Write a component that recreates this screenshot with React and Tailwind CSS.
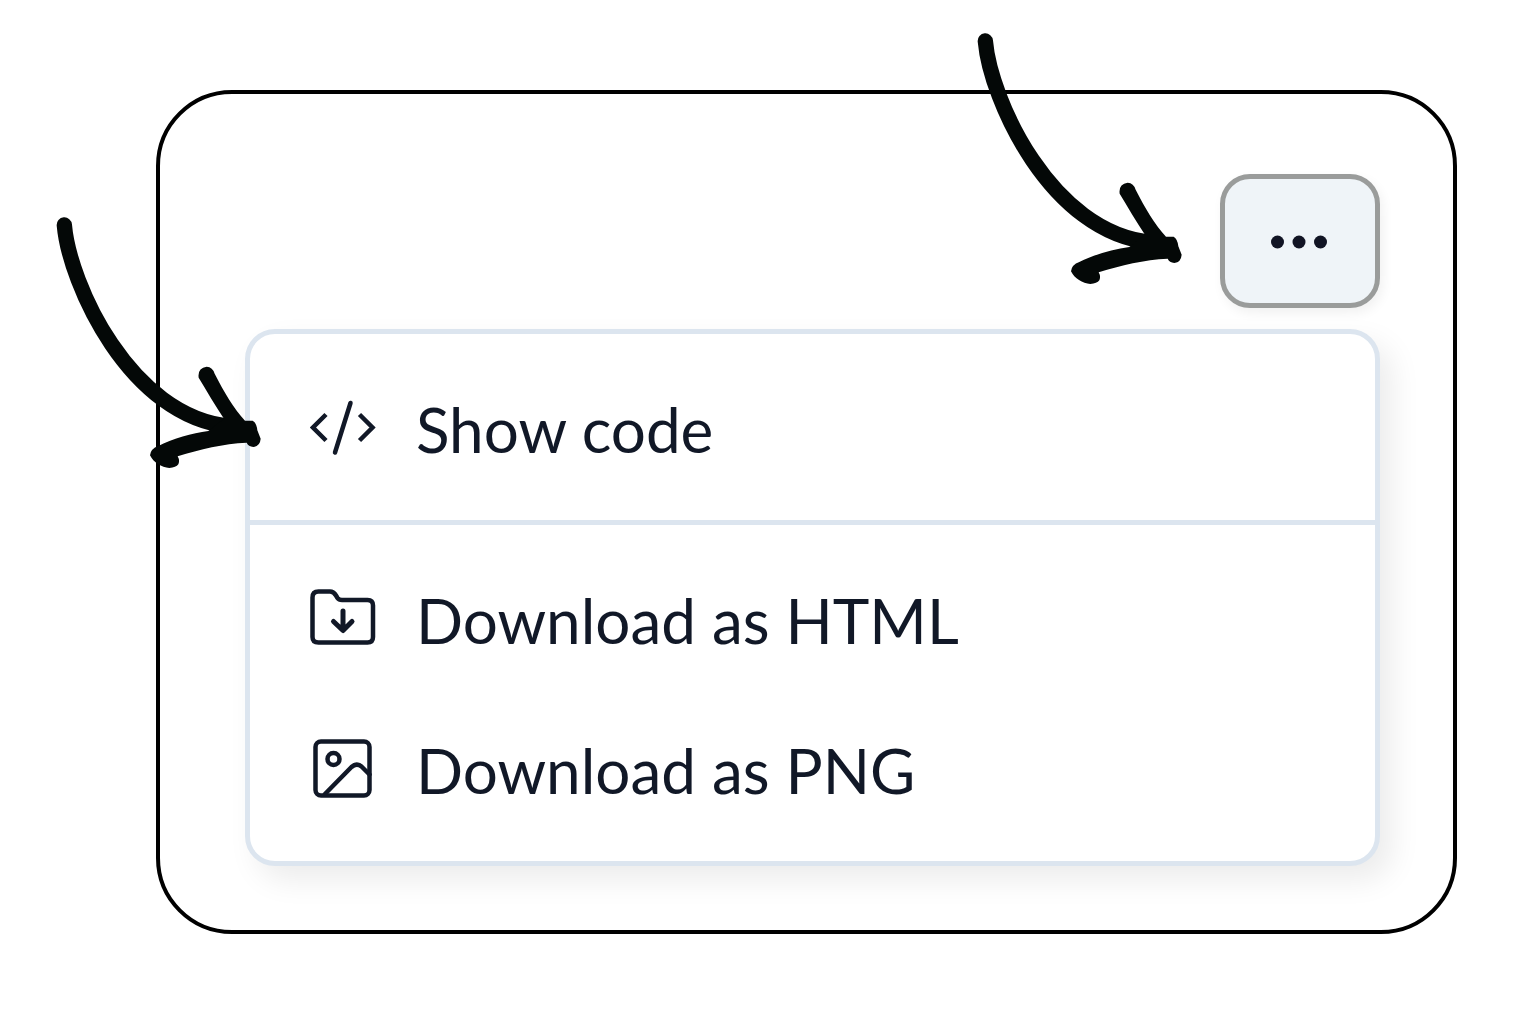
import React from "react";

function HandArrow({ className }) {
  return (
    <svg
      aria-hidden="true"
      viewBox="78 50 615 753"
      className={`pointer-events-none absolute h-[251px] w-[205px] ${className}`}
    >
      <path
        fill="none"
        stroke="#040807"
        strokeWidth="46"
        strokeLinecap="round"
        d="M103 74C118 250 300 650 600 678"
      />
      <path
        fill="#040807"
        d="M582 655C555 614 530 572 506 532Q502 503 530 499Q548 500 554 520C582 575 612 625 645 661L668 661Q680 668 682 690L692 715Q690 738 670 740Q655 738 650 727C580 730 510 747 443 768Q450 780 445 792Q438 802 418 803C395 801 370 787 360 765Q362 745 385 737C430 715 485 698 535 692Z"
      />
    </svg>
  );
}

function Icon({ children }) {
  return (
    <svg
      aria-hidden="true"
      viewBox="0 0 66 60"
      className="h-[60px] w-[66px] shrink-0"
      fill="none"
      stroke="currentColor"
      strokeWidth="4.5"
      strokeLinecap="round"
      strokeLinejoin="round"
    >
      {children}
    </svg>
  );
}

function CodeIcon() {
  return (
    <Icon>
      <g strokeLinecap="butt" strokeLinejoin="miter">
        <path d="M16 17.5L3 30.5L16 43.5" />
        <path d="M49.5 17.5L62.5 30.5L49.5 43.5" />
      </g>
      <path d="M40.5 6L25 55.5" />
    </Icon>
  );
}

function FolderIcon() {
  return (
    <Icon>
      <path d="M8.5 3.5H20C23 3.5 24.5 5 26 7.5L27.5 10C28.5 11.5 30 12 32 12H57.5Q63 12 63 17.5V49Q63 54.5 57.5 54.5H8.5Q2.5 54.5 2.5 49V9.5Q2.5 3.5 8.5 3.5Z" />
      <path strokeWidth="5" d="M33 23V42M23.5 33.5L33 42.5L42 33.5" />
    </Icon>
  );
}

function ImageIcon() {
  return (
    <Icon>
      <rect x="5.5" y="3.5" width="54" height="54" rx="5.5" />
      <circle cx="23.5" cy="21" r="6" />
      <path d="M15 56L41.5 29Q46.5 24.5 51.5 28.5L59.5 36.5" />
    </Icon>
  );
}

function MenuItem({ icon, children }) {
  return (
    <button
      type="button"
      role="menuitem"
      className="flex h-[150px] w-full items-center gap-10 px-[60px] text-left"
    >
      {icon}
      <span className="pt-1">{children}</span>
    </button>
  );
}

export default function App() {
  return (
    <main className="bg-white pt-[90px] pr-[69px] pb-24 pl-[156px] font-['Lato',sans-serif] text-[62px] leading-[80px] text-[#111827]">
      <section className="rounded-[76px] border-4 border-black pt-20 pr-[73px] pb-16 pl-[85px]">
        <div className="flex justify-end">
          <div className="relative">
            <button
              type="button"
              aria-label="More options"
              aria-haspopup="menu"
              aria-expanded="true"
              className="flex h-[134px] w-40 items-center justify-center rounded-[30px] border-[5px] border-[#9a9c9b] bg-[#eff4f8] text-[#111424] shadow-[3px_5px_12px_rgba(0,0,0,0.06)]"
            >
              <svg aria-hidden="true" viewBox="0 0 58 16" className="h-4 w-[58px]" fill="currentColor">
                <circle cx="6.5" cy="9" r="6.5" />
                <circle cx="28" cy="9" r="6.5" />
                <circle cx="49.5" cy="9" r="6.5" />
              </svg>
            </button>
            <HandArrow className="top-[-141px] right-[198px]" />
          </div>
        </div>
        <div className="relative mt-[21px]">
          <div
            role="menu"
            className="rounded-[30px] border-[5px] border-[#dce5ef] bg-white shadow-[12px_14px_30px_rgba(0,0,0,0.08)]"
          >
            <div className="border-b-[5px] border-[#dce5ef] py-[18px]">
              <MenuItem icon={<CodeIcon />}>Show code</MenuItem>
            </div>
            <div className="py-[18px]">
              <MenuItem icon={<FolderIcon />}>Download as HTML</MenuItem>
              <MenuItem icon={<ImageIcon />}>Download as PNG</MenuItem>
            </div>
          </div>
          <HandArrow className="top-[-112px] left-[-189px]" />
        </div>
      </section>
    </main>
  );
}
